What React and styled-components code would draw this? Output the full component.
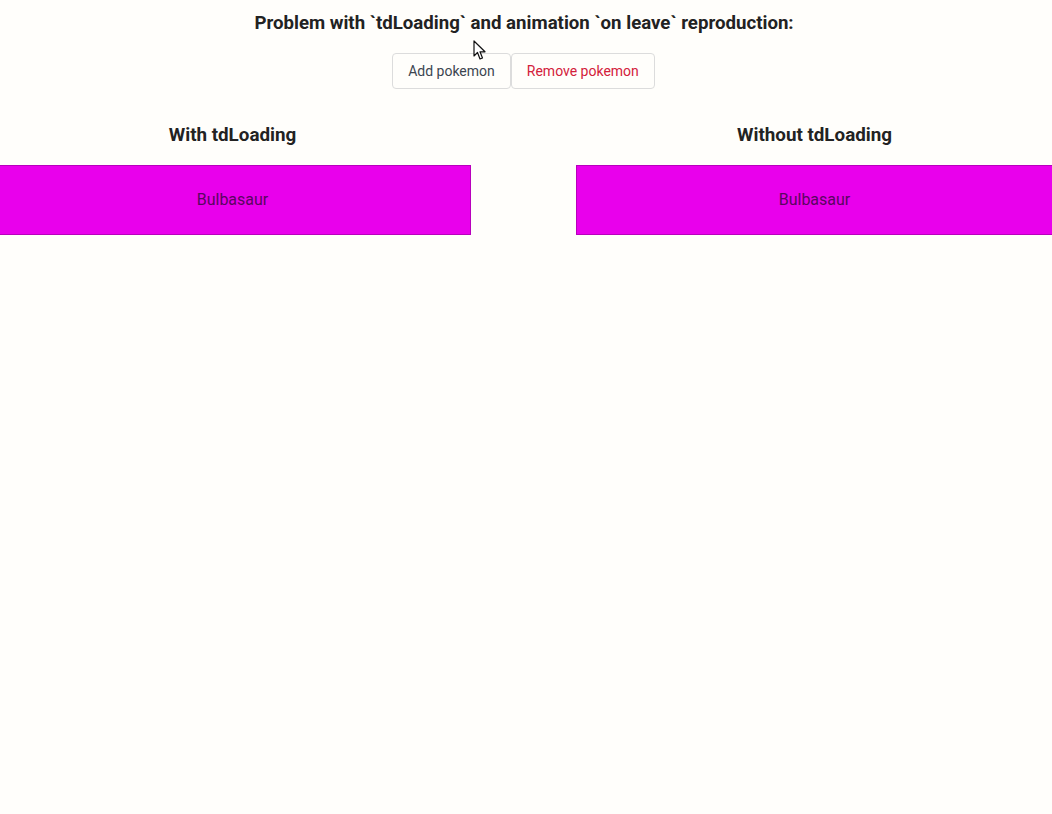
import React from "react";
import styled, { createGlobalStyle } from "styled-components";

const GlobalStyle = createGlobalStyle`
  html, body {
    margin: 0;
    padding: 0;
    background: #fffefb;
    overflow-x: hidden;
  }
  body {
    font-family: Roboto, "Liberation Sans", sans-serif;
    color: #212121;
  }
`;

const Page = styled.div`
  position: relative;
  min-height: 814px;
  padding-top: 12px;
`;

const Title = styled.h1`
  margin: 0;
  text-align: center;
  font-size: 18.65px;
  font-weight: 700;
  line-height: 22px;
  color: #222;
  padding-right: 4px;
`;

const Toolbar = styled.div`
  display: flex;
  justify-content: center;
  margin-top: 19px;
  padding-right: 5px;
`;

const Button = styled.button`
  height: 36px;
  padding: 0 15px;
  background: #fffefb;
  border: 1px solid #dcdcdc;
  border-radius: 4px;
  font-family: Roboto, "Liberation Sans", sans-serif;
  font-size: 14px;
  color: ${p => (p.$danger ? "#d3203a" : "#3c4550")};
  cursor: pointer;
`;

const Columns = styled.div`
  display: grid;
  grid-template-columns: 477px 477px;
  justify-content: space-between;
  width: 1059px;
  margin-left: -6px;
  margin-top: 35px;
`;

const Column = styled.section`
  display: flex;
  flex-direction: column;
`;

const Heading = styled.h2`
  margin: 0;
  text-align: center;
  font-size: 18.8px;
  font-weight: 700;
  line-height: 22px;
  color: #222;
`;

const Row = styled.div`
  margin-top: 19px;
  height: 68px;
  display: flex;
  align-items: center;
  justify-content: center;
  background: #e900ec;
  border: 1px solid #b800bc;
  font-size: 16px;
  line-height: 18px;
  color: #5a0660;
`;

const Cursor = styled.svg`
  position: absolute;
  left: 473px;
  top: 40px;
`;

function Pointer() {
  return (
    <Cursor width="14" height="21" viewBox="0 0 14 21">
      <path
        d="M1 1 L1 16 L4.5 12.5 L7 19 L9.5 18 L7 11.8 L12 11.8 Z"
        fill="#fff"
        stroke="#111"
        strokeWidth="1.2"
        strokeLinejoin="round"
      />
    </Cursor>
  );
}

export default function App() {
  const pokemons = ["Bulbasaur"];
  return (
    <Page>
      <GlobalStyle />
      <Title>Problem with `tdLoading` and animation `on leave` reproduction:</Title>
      <Toolbar>
        <Button>Add pokemon</Button>
        <Button $danger>Remove pokemon</Button>
      </Toolbar>
      <Columns>
        <Column>
          <Heading>With tdLoading</Heading>
          {pokemons.map(p => <Row key={p}>{p}</Row>)}
        </Column>
        <Column>
          <Heading>Without tdLoading</Heading>
          {pokemons.map(p => <Row key={p}>{p}</Row>)}
        </Column>
      </Columns>
      <Pointer />
    </Page>
  );
}
